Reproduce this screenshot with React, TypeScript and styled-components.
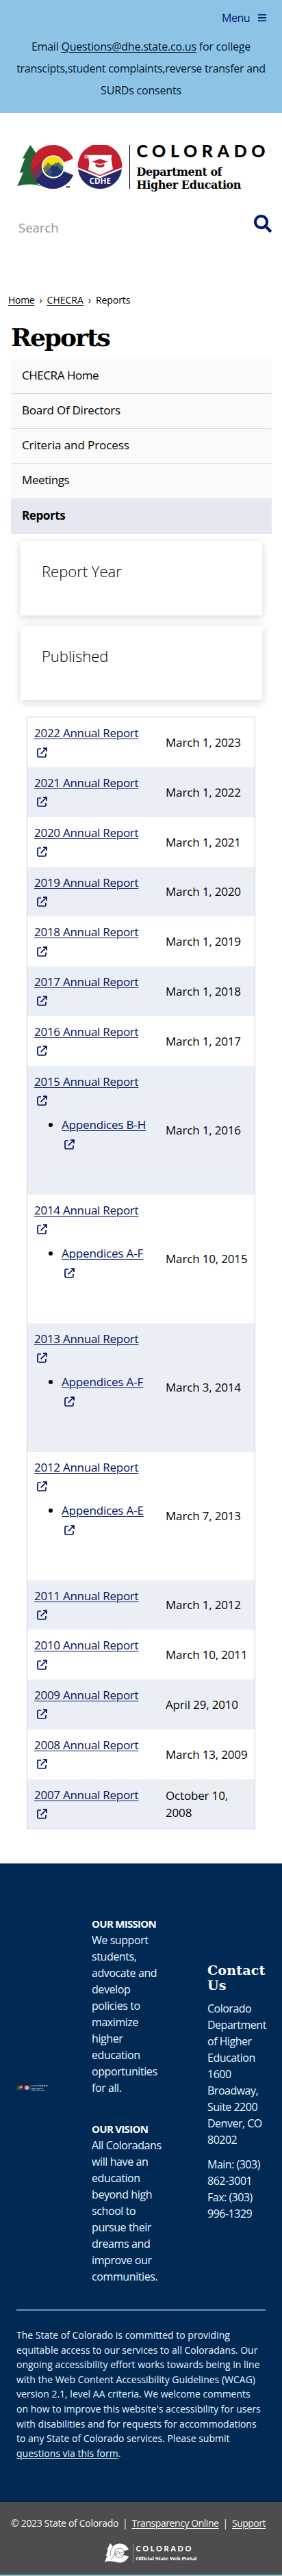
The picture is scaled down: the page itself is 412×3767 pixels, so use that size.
import React from "react";
import styled, { createGlobalStyle } from "styled-components";
import { FaBars, FaSearch } from "react-icons/fa";

const sans = `"Open Sans", "Noto Sans", sans-serif`;
const slab = `"DejaVu Serif", serif`;

const GlobalStyle = createGlobalStyle`
  * { box-sizing: border-box; }
  body { margin: 0; background: #fff; }
  a { color: inherit; text-decoration: underline; text-underline-offset: 2px; text-decoration-thickness: 1px; }
`;

const Page = styled.div`
  width: 412px;
  min-height: 3767px;
  display: flex;
  flex-direction: column;
  background: #fff;
  color: #000;
  font: 400 16px/24px ${sans};
  white-space: nowrap;
`;

const Tracked = styled.span<{ $ls: number }>`
  letter-spacing: ${(p) => p.$ls}px;
`;

const TopBand = styled.header`
  height: 165px;
  padding-top: 14px;
  background: #8dc4e6;
`;
const MenuButton = styled.div`
  display: flex;
  justify-content: flex-end;
  align-items: center;
  gap: 11px;
  height: 24px;
  padding-right: 22px;
  color: #001970;
  letter-spacing: -0.5px;
`;
const Notice = styled.p`
  margin: 14px 0 0;
  text-align: center;
  line-height: 32px;
  color: #00182b;
`;

const LogoArea = styled.div`
  padding: 47px 0 0 25px;
  height: 145px;
  svg { display: block; }
`;
const SearchBar = styled.div`
  display: flex;
  justify-content: space-between;
  height: 48px;
  padding: 4px 15px 0 27px;
  color: #929292;
  font-size: 18.5px;
  line-height: 38px;
  svg { color: #001970; }
`;

const Breadcrumbs = styled.nav`
  display: flex;
  gap: 7px;
  margin-top: 69px;
  padding-left: 12px;
  font-size: 14px;
  line-height: 24px;
`;
const Title = styled.h1`
  margin: 17px 0 0 16px;
  font: 700 36px/50px ${slab};
  letter-spacing: -2px;
`;
const SideMenu = styled.ul`
  list-style: none;
  margin: 6.5px 15px 0 16px;
  padding: 0;
`;
const SideItem = styled.li<{ $active?: boolean; $ls: number }>`
  height: 51.3px;
  padding: 0 16px;
  border-bottom: 1px solid ${(p) => (p.$active ? "#e0e2ee" : "#dcdede")};
  background: ${(p) => (p.$active ? "#e5e8f0" : "#fafafa")};
  font-size: 17px;
  font-weight: ${(p) => (p.$active ? 700 : 400)};
  line-height: 48px;
  letter-spacing: ${(p) => p.$ls}px;
`;

const Cards = styled.div`
  display: flex;
  flex-direction: column;
  gap: 15px;
  margin: 10px 29px 0 30px;
`;
const Card = styled.section`
  height: 109px;
  padding: 28px 31px;
  background: #fff;
  box-shadow: 0 3px 12px rgba(0, 0, 0, 0.16);
  font-size: 22px;
  font-weight: 300;
  line-height: 32px;
`;

const ReportTable = styled.div`
  margin: 24.5px 39px 0;
  border: 1px solid #cfcfcf;
`;
const ReportRow = styled.div<{ $tall: boolean; $shade: boolean }>`
  display: grid;
  grid-template-columns: 192px 1fr;
  height: ${(p) => (p.$tall ? 188 : 72.75)}px;
  background: ${(p) => (p.$shade ? "#eaeff6" : "#fff")};
  font-size: 17px;
  line-height: 25.6px;
`;
const ReportCell = styled.div`
  padding: 10px;
  color: #00125f;
`;
const DateCell = styled.div`
  padding-left: 10px;
  align-self: center;
  white-space: pre;
`;
const Appendices = styled.ul`
  margin: 15.5px 0 0;
  padding-left: 40px;
  li::marker { color: #000; }
`;
const LinkIcon = styled.svg`
  display: block;
  width: 15px;
  height: 15px;
  margin: 7.6px 0 3px 4px;
`;

const Footer = styled.footer`
  margin-top: 49.5px;
  height: 934px;
  padding: 0 24px;
  background: #002a54;
  color: #e9f6ff;
`;
const FooterColumns = styled.div`
  display: grid;
  grid-template-columns: 110px 169px 85px;
  height: 654px;
  border-bottom: 2px solid #6c93b8;
`;
const FooterLogo = styled.div`
  padding-top: 324px;
  svg { display: block; }
`;
const Statements = styled.div`
  padding-top: 76px;
  p { margin: 0 0 36px; }
`;
const Heading = styled.b`
  font-size: 15px;
  letter-spacing: -0.7px;
  color: #fff;
`;
const Contact = styled.div`
  padding-top: 145px;
  h2 { margin: 0 0 11px; font: 700 19px/22px ${slab}; letter-spacing: 0.2px; color: #fff; }
  p { margin: 0 0 12px; letter-spacing: -0.5px; }
`;
const Accessibility = styled.p`
  margin: 0;
  padding-top: 25px;
  font-size: 14px;
  line-height: 21.6px;
`;
const BottomBar = styled.div`
  height: 108px;
  padding: 19px 24px 0 16px;
  background: #4d4d4d;
  border-bottom: 2px solid #8dc4e6;
  color: #f5f5f5;
  svg { display: block; margin: 17px 0 0 136px; }
`;
const BottomLinks = styled.div`
  display: flex;
  justify-content: space-between;
  font-size: 14px;
  line-height: 24px;
`;

function ExternalIcon() {
  return (
    <LinkIcon viewBox="0 0 15 15" fill="none" stroke="currentColor" strokeWidth="1.7">
      <path d="M6 2H2.6Q1 2 1 3.6V12.4Q1 14 2.6 14H11.4Q13 14 13 12.4V9" />
      <path d="M5.6 9.4L13 2M9 1.1H14V6.1" />
      <path d="M10.5 1H14.2V4.7Z" fill="currentColor" stroke="none" />
    </LinkIcon>
  );
}

function TreeAndC() {
  return (
    <>
      <path
        d="M19.3 0L31 17V60H37Q18 55 .3 60L9 40L3.7 40.7L11.5 19L7.7 19.7Z"
        fill="#216437"
      />
      <path d="M52 0A32 32 0 0 1 82 20L67 26L60 36L20.6 38A32 32 0 0 1 52 0Z" fill="#c4202f" />
      <path d="M25 49L42 32L67 38L82 44A32 32 0 0 1 28 53Z" fill="#25276b" />
      <path d="M20.6 38L36 23L42 35L27 52Q22 46 20.6 38Z" fill="#96243f" />
      <path d="M23.2 45L37 31L42 36L27 52Z" fill="#5c3a66" />
      <circle cx="52.7" cy="32" r="16.8" fill="#fff" />
      <circle cx="52.7" cy="32" r="15" fill="#fae100" />
      <path d="M38 34L45 25.5L51 30L56.5 25.5L67.3 35A15 15 0 0 1 38 34Z" fill="#7d8737" />
      <path d="M49 32L60 25L67.6 32A15 15 0 0 1 65 41Z" fill="#3b7280" />
      <path d="M41.5 41L52 29L55 32L58 29.5L66 39A15 15 0 0 1 41.5 41Z" fill="#1f3670" />
      <path d="M38.5 37L44 31L52 39L47 46Z" fill="#4d6580" opacity=".6" />
    </>
  );
}

function DepartmentLogo({ width, height, ink }: { width: number; height: number; ink: string }) {
  return (
    <svg width={width} height={height} viewBox="0 0 364 68">
      <TreeAndC />
      <text x="71" y="63" fill={ink} fontFamily={sans} fontSize="4" fontWeight="700">TM</text>
      <circle cx="121" cy="32" r="32.2" fill="#25276b" />
      <path d="M88.9 33A32.2 32.2 0 1 1 153.1 33L121 46.5Z" fill="#c4202f" />
      <path d="M88.9 33L121 45.5L153.1 33V35.3L121 48.5L88.9 35.3Z" fill="#fff" />
      <path d="M102 14.7H138.5Q137 19 138 24L140 35.5L121 44L104 36.5L105.5 27L104 17.5Z" fill="#fff" />
      <circle cx="101" cy="17" r="2" fill="none" stroke="#fff" strokeWidth="1.2" />
      <path d="M109 24.3L121 20.6L133 24.3L121 28.3Z" fill="#c4202f" />
      <path d="M114.5 27.4L121 29.4L127.5 27.4V31Q121 34.8 114.5 31Z" fill="#c4202f" />
      <text x="105.5" y="56.8" fill="#fff" fontFamily={sans} fontSize="11.5" fontWeight="700" textLength="31.5">CDHE</text>
      <rect x="164" y="0" width="1" height="64" fill={ink} />
      <text x="174.5" y="17.7" fill={ink} fontFamily="Lato, sans-serif" fontSize="25" fontWeight="900" textLength="188">COLORADO</text>
      <text x="174.5" y="45" fill={ink} fontFamily={slab} fontSize="16" fontWeight="700" textLength="125">Department of</text>
      <text x="174.5" y="63.8" fill={ink} fontFamily={slab} fontSize="16" fontWeight="700" textLength="153">Higher Education</text>
    </svg>
  );
}

function PortalLogo() {
  return (
    <svg width="137" height="30" viewBox="0 0 137 30">
      <path d="M9 0L14 6L20 28Q8 25 1 27.5L4.5 18.5L2.5 19L6 9.5L4 10Z" fill="#fff" />
      <path d="M36 9.5A14 14 0 1 0 36 19.5L28 17V11.5Z" fill="#fff" />
      <circle cx="22.5" cy="14.2" r="7" fill="#fff" stroke="#555" strokeWidth=".8" />
      <path d="M10 24L20 11L24 15L26 13L29 17M16 18L21 14L27 20M13 5Q8 11 9 19" fill="none" stroke="#555" strokeWidth=".7" />
      <rect x="42" y="1" width="1" height="26" fill="#999" />
      <text x="46.5" y="12.3" fill="#fff" fontFamily="Lato, sans-serif" fontSize="11" fontWeight="900" textLength="81">COLORADO</text>
      <text x="46.5" y="24.5" fill="#fff" fontFamily={slab} fontSize="7" fontWeight="700" textLength="89">Official State Web Portal</text>
    </svg>
  );
}

const menu: { label: string; ls: number; active?: boolean }[] = [
  { label: "CHECRA Home", ls: -0.45 },
  { label: "Board Of Directors", ls: -0.25 },
  { label: "Criteria and Process", ls: -0.1 },
  { label: "Meetings", ls: -0.4 },
  { label: "Reports", ls: -0.4, active: true },
];

const reports: { year: number; date: string; appendices?: string }[] = [
  { year: 2022, date: "March 1, 2023" },
  { year: 2021, date: "March 1, 2022" },
  { year: 2020, date: "March 1, 2021" },
  { year: 2019, date: "March 1, 2020" },
  { year: 2018, date: "March 1, 2019" },
  { year: 2017, date: "March 1, 2018" },
  { year: 2016, date: "March 1, 2017" },
  { year: 2015, date: "March 1, 2016", appendices: "B-H" },
  { year: 2014, date: "March 10, 2015", appendices: "A-F" },
  { year: 2013, date: "March 3, 2014", appendices: "A-F" },
  { year: 2012, date: "March 7, 2013", appendices: "A-E" },
  { year: 2011, date: "March 1, 2012" },
  { year: 2010, date: "March 10, 2011" },
  { year: 2009, date: "April 29, 2010" },
  { year: 2008, date: "March 13, 2009" },
  { year: 2007, date: "October 10,\n2008" },
];

export default function App() {
  return (
    <Page>
      <GlobalStyle />
      <TopBand>
        <MenuButton>Menu <FaBars size={14} /></MenuButton>
        <Notice>
          <Tracked $ls={-0.22}>Email <a href="#">Questions@dhe.state.co.us</a> for college</Tracked><br />
          <Tracked $ls={-0.27}>transcipts,student complaints,reverse transfer and</Tracked><br />
          <Tracked $ls={-0.2}>SURDs consents</Tracked>
        </Notice>
      </TopBand>
      <LogoArea><DepartmentLogo width={364} height={68} ink="#000" /></LogoArea>
      <SearchBar>Search<FaSearch size={26} /></SearchBar>

      <Breadcrumbs>
        <Tracked $ls={-0.3}><a href="#">Home</a></Tracked>
        <span>›</span>
        <a href="#">CHECRA</a>
        <span>›</span>
        <Tracked $ls={-0.1}>Reports</Tracked>
      </Breadcrumbs>
      <Title>Reports</Title>
      <SideMenu>
        {menu.map((m) => (
          <SideItem key={m.label} $ls={m.ls} $active={m.active}>{m.label}</SideItem>
        ))}
      </SideMenu>
      <Cards>
        <Card>Report Year</Card>
        <Card>Published</Card>
      </Cards>
      <ReportTable>
        {reports.map((r, i) => (
          <ReportRow key={r.year} $tall={!!r.appendices} $shade={i % 2 === 1}>
            <ReportCell>
              <Tracked $ls={-0.27}><a href="#">{r.year} Annual Report</a></Tracked>
              <ExternalIcon />
              {r.appendices && (
                <Appendices>
                  <li>
                    <Tracked $ls={-0.17}><a href="#">Appendices {r.appendices}</a></Tracked>
                    <ExternalIcon />
                  </li>
                </Appendices>
              )}
            </ReportCell>
            <DateCell><Tracked $ls={-0.17}>{r.date}</Tracked></DateCell>
          </ReportRow>
        ))}
      </ReportTable>

      <Footer>
        <FooterColumns>
          <FooterLogo><DepartmentLogo width={46} height={9} ink="#fff" /></FooterLogo>
          <Statements>
            <p>
              <Heading>OUR MISSION</Heading><br />
              <Tracked $ls={-0.42}>
                We support<br />students,<br />advocate and<br />develop<br />policies to<br />maximize<br />
                higher<br />education<br />opportunities<br />for all.
              </Tracked>
            </p>
            <p>
              <Heading>OUR VISION</Heading><br />
              <Tracked $ls={-0.4}>
                All Coloradans<br />will have an<br />education<br />beyond high<br />school to<br />
                pursue their<br />dreams and<br />improve our<br />communities.
              </Tracked>
            </p>
          </Statements>
          <Contact>
            <h2>Contact<br />Us</h2>
            <p>
              Colorado<br />Department<br />of Higher<br />Education<br />1600<br />Broadway,<br />
              Suite 2200<br />Denver, CO<br />80202
            </p>
            <p>Main: (303)<br />862-3001<br />Fax: (303)<br />996-1329</p>
          </Contact>
        </FooterColumns>
        <Accessibility>
          The State of Colorado is committed to providing<br />
          equitable access to our services to all Coloradans. Our<br />
          ongoing accessibility effort works towards being in line<br />
          with the Web Content Accessibility Guidelines (WCAG)<br />
          version 2.1, level AA criteria. We welcome comments<br />
          on how to improve this website's accessibility for users<br />
          with disabilities and for requests for accommodations<br />
          to any State of Colorado services. Please submit<br />
          <a href="#">questions via this form</a>.
        </Accessibility>
      </Footer>
      <BottomBar>
        <BottomLinks>
          <Tracked $ls={-0.3}>© 2023 State of Colorado</Tracked>
          <span>|</span>
          <Tracked $ls={-0.44}><a href="#">Transparency Online</a></Tracked>
          <span>|</span>
          <Tracked $ls={-0.5}><a href="#">Support</a></Tracked>
        </BottomLinks>
        <PortalLogo />
      </BottomBar>
    </Page>
  );
}
